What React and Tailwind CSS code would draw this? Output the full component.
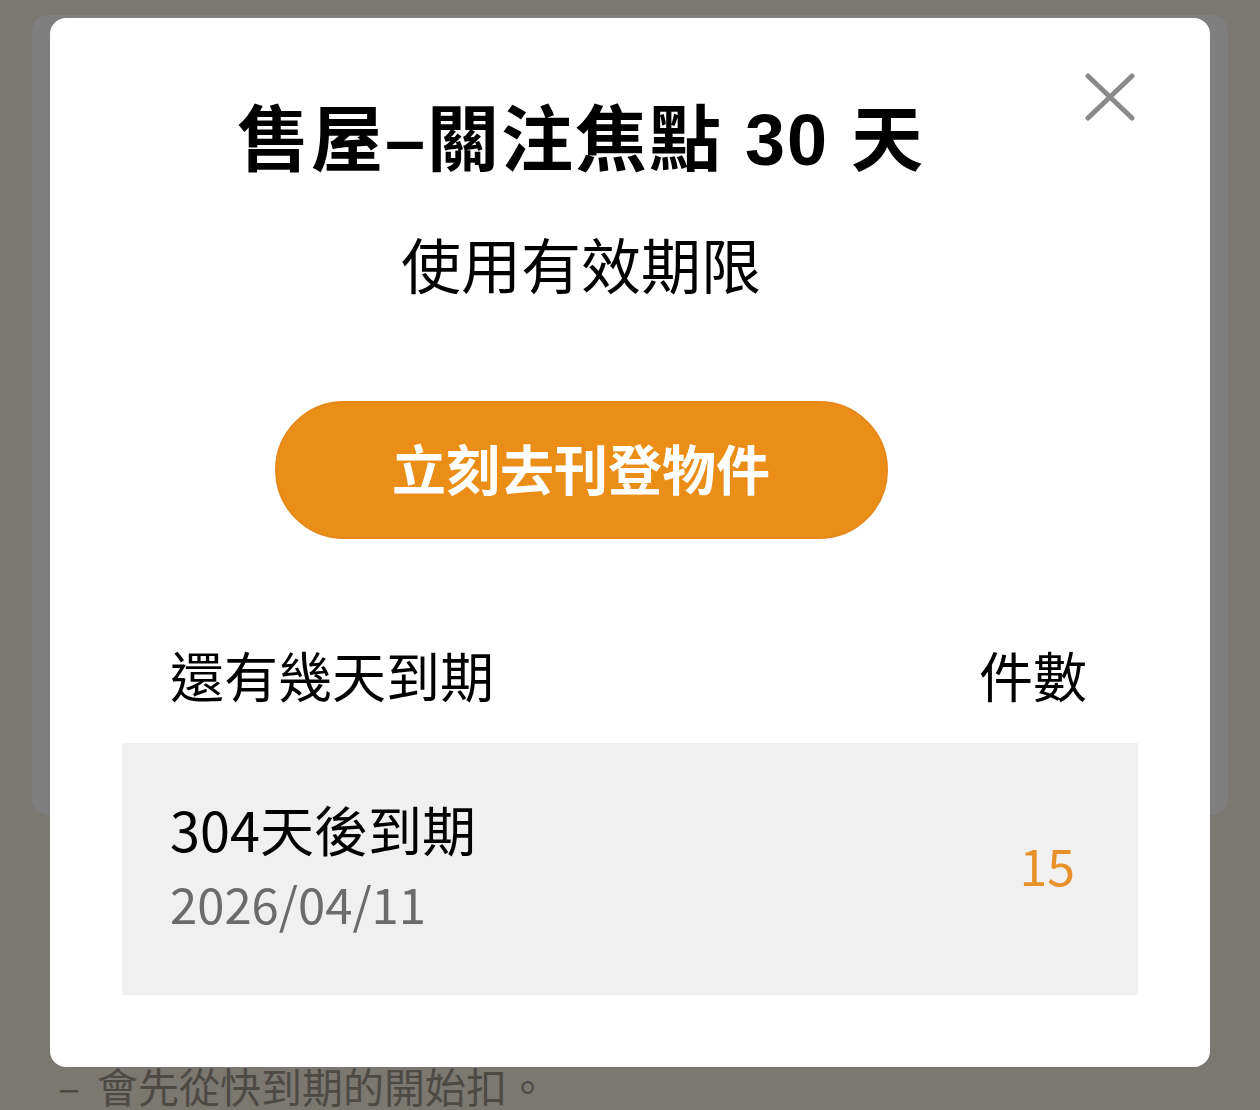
export default function App() {
  const font = { fontFamily: '"Noto Sans CJK TC", "Noto Sans", sans-serif' };
  const titleFont = { fontFamily: '"Liberation Sans", "Noto Sans CJK TC", sans-serif' };
  return (
    <div className="relative w-[1260px] h-[1110px] overflow-hidden bg-[#7b7771]" style={font}>
      {/* page behind overlay */}
      <div className="pt-[15px] px-[32px]">
        <div className="h-[800px] rounded-[16px] bg-[#7f7f80]"></div>
      </div>
      <div className="pt-[250px] pl-[58px] flex items-center text-[41px] leading-none text-[#4d4a46] whitespace-nowrap">
        <span className="w-[39px]">–</span>
        <span>會先從快到期的開始扣。</span>
      </div>

      {/* modal */}
      <div className="absolute left-[50px] top-[18px] w-[1160px] h-[1049px] rounded-[16px] bg-white">
        <button className="absolute top-[55px] right-[75px] w-[50px] h-[48px]">
          <svg width="50" height="48" viewBox="0 0 50 48" fill="none">
            <path d="M3 3 L47 45 M47 3 L3 45" stroke="#8a8a8a" strokeWidth="5" strokeLinecap="round" />
          </svg>
        </button>

        <div className="mr-[98px] pt-[86px] flex flex-col items-center">
          <div className="text-[72px] font-bold leading-none tracking-[2px] text-black whitespace-nowrap" style={titleFont}>售屋–關注焦點 30 天</div>
          <div className="mt-[57px] text-[60px] leading-none text-black whitespace-nowrap">使用有效期限</div>
          <div className="mt-[108px] w-[613px] h-[138px] rounded-full bg-[#ea8e17] border-2 border-[#e7881a] flex items-center justify-center">
            <span className="text-[54px] font-bold leading-none text-white -mt-[4px]">立刻去刊登物件</span>
          </div>
        </div>

        <div className="mt-[109px] pl-[120px] pr-[123px] flex justify-between text-[54px] leading-none text-black">
          <span>還有幾天到期</span>
          <span>件數</span>
        </div>

        <div className="mt-[41px] mx-[72px] h-[252px] bg-[#f0f0f0] pl-[48px] pr-[63px] flex items-center justify-between">
          <div className="flex flex-col -mt-[10px]">
            <span className="text-[54px] leading-none text-black">304天後到期</span>
            <span className="mt-[22px] text-[49px] leading-none text-[#6b6b6b]">2026/04/11</span>
          </div>
          <span className="text-[50px] leading-none text-[#e8902a] -mt-[10px]">15</span>
        </div>
      </div>
    </div>
  );
}
